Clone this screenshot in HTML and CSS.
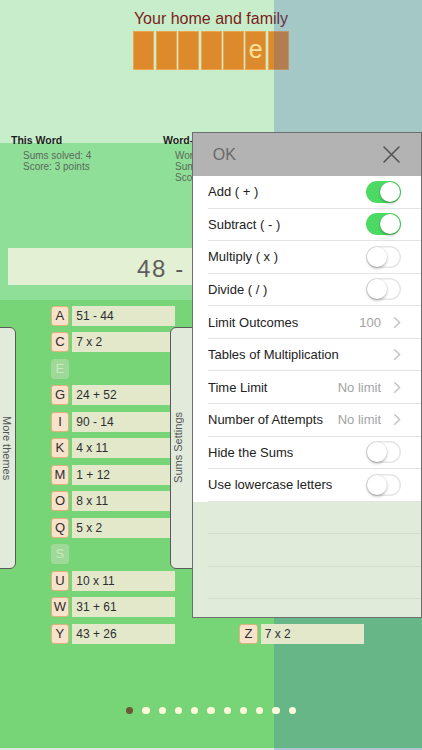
FILE: index.html
```html
<!DOCTYPE html>
<html lang="en">
<head>
<meta charset="utf-8">
<title>Letter Sums</title>
<link rel="stylesheet" href="styles.css">
</head>
<body>
<div class="screen">
  <header class="theme">
    <h1 class="theme-title">Your home and family</h1>
    <div class="word">
      <span class="cell"></span>
      <span class="cell"></span>
      <span class="cell"></span>
      <span class="cell"></span>
      <span class="cell"></span>
      <span class="cell">e</span>
      <span class="cell"></span>
    </div>
  </header>

  <section class="stats">
    <div class="stat-group">
      <h2>This Word</h2>
      <p>Sums solved: 4</p>
      <p>Score: 3 points</p>
    </div>
    <div class="stat-group">
      <h2>Word-list</h2>
      <p>Words solved: 2</p>
      <p>Sums solved: 11</p>
      <p>Score: 9 points</p>
    </div>
  </section>

  <div class="sum-bar"><span class="sum">48 - 41 = ?</span></div>

  <section class="letters">
    <div class="letter-col">
      <div class="letter-row"><span class="tile">A</span><span class="expr">51 - 44</span></div>
      <div class="letter-row"><span class="tile">C</span><span class="expr">7 x 2</span></div>
      <div class="letter-row"><span class="tile used">E</span></div>
      <div class="letter-row"><span class="tile">G</span><span class="expr">24 + 52</span></div>
      <div class="letter-row"><span class="tile">I</span><span class="expr">90 - 14</span></div>
      <div class="letter-row"><span class="tile">K</span><span class="expr">4 x 11</span></div>
      <div class="letter-row"><span class="tile">M</span><span class="expr">1 + 12</span></div>
      <div class="letter-row"><span class="tile">O</span><span class="expr">8 x 11</span></div>
      <div class="letter-row"><span class="tile">Q</span><span class="expr">5 x 2</span></div>
      <div class="letter-row"><span class="tile used">S</span></div>
      <div class="letter-row"><span class="tile">U</span><span class="expr">10 x 11</span></div>
      <div class="letter-row"><span class="tile">W</span><span class="expr">31 + 61</span></div>
      <div class="letter-row"><span class="tile">Y</span><span class="expr">43 + 26</span></div>
    </div>
    <div class="letter-col letter-col-end">
      <div class="letter-row"><span class="tile">Z</span><span class="expr">7 x 2</span></div>
    </div>
  </section>

  <nav class="pager">
    <span class="dot current"></span>
    <span class="dot"></span>
    <span class="dot"></span>
    <span class="dot"></span>
    <span class="dot"></span>
    <span class="dot"></span>
    <span class="dot"></span>
    <span class="dot"></span>
    <span class="dot"></span>
    <span class="dot"></span>
    <span class="dot"></span>
  </nav>

  <div class="shade"></div>

  <button class="edge-tab edge-tab-left" type="button"><span class="edge-label">More themes</span></button>
  <button class="edge-tab edge-tab-right" type="button"><span class="edge-label">Sums Settings</span></button>

  <div class="settings">
    <div class="settings-head">
      <span class="ok">OK</span>
      <svg class="close" width="17" height="17" viewBox="0 0 17 17">
        <path d="M1 1 L16 16 M16 1 L1 16" stroke="#555" stroke-width="1.6" fill="none" stroke-linecap="round"/>
      </svg>
    </div>
    <ul class="settings-list">
      <li class="setting"><span class="setting-label">Add ( + )</span><span class="switch on"></span></li>
      <li class="setting"><span class="setting-label">Subtract ( - )</span><span class="switch on"></span></li>
      <li class="setting"><span class="setting-label">Multiply ( x )</span><span class="switch"></span></li>
      <li class="setting"><span class="setting-label">Divide ( / )</span><span class="switch"></span></li>
      <li class="setting"><span class="setting-label">Limit Outcomes</span><span class="setting-value">100</span>
        <svg class="chevron" width="8" height="13" viewBox="0 0 8 13"><path d="M1.2 1.2 L6.6 6.5 L1.2 11.8" stroke="#c4c4c4" stroke-width="1.5" fill="none"/></svg></li>
      <li class="setting"><span class="setting-label">Tables of Multiplication</span>
        <svg class="chevron" width="8" height="13" viewBox="0 0 8 13"><path d="M1.2 1.2 L6.6 6.5 L1.2 11.8" stroke="#c4c4c4" stroke-width="1.5" fill="none"/></svg></li>
      <li class="setting"><span class="setting-label">Time Limit</span><span class="setting-value">No limit</span>
        <svg class="chevron" width="8" height="13" viewBox="0 0 8 13"><path d="M1.2 1.2 L6.6 6.5 L1.2 11.8" stroke="#c4c4c4" stroke-width="1.5" fill="none"/></svg></li>
      <li class="setting"><span class="setting-label">Number of Attempts</span><span class="setting-value">No limit</span>
        <svg class="chevron" width="8" height="13" viewBox="0 0 8 13"><path d="M1.2 1.2 L6.6 6.5 L1.2 11.8" stroke="#c4c4c4" stroke-width="1.5" fill="none"/></svg></li>
      <li class="setting"><span class="setting-label">Hide the Sums</span><span class="switch"></span></li>
      <li class="setting"><span class="setting-label">Use lowercase letters</span><span class="switch"></span></li>
    </ul>
    <ul class="settings-blank">
      <li class="setting blank"></li>
      <li class="setting blank"></li>
      <li class="setting blank"></li>
    </ul>
  </div>
</div>
</body>
</html>
```

FILE: styles.css
```css
* {
  box-sizing: border-box;
  margin: 0;
  padding: 0;
}

html,
body {
  width: 422px;
  height: 750px;
  overflow: hidden;
}

body {
  font-family: "Liberation Sans", Arial, sans-serif;
  background: linear-gradient(to bottom,
    #c8edca 0, #c8edca 143px,
    #8fdf98 143px, #8fdf98 300px,
    #77d477 300px, #77d477 748px,
    #dbe8db 748px);
}

.screen {
  position: relative;
  width: 422px;
  height: 750px;
}

/* theme title and the word being spelled */
.theme {
  padding-top: 9px;
  text-align: center;
}

.theme-title {
  font-size: 16px;
  line-height: 19px;
  font-weight: normal;
  color: #7b1d1d;
}

.word {
  display: flex;
  justify-content: center;
  gap: 1.35px;
  margin-top: 3px;
}

.cell {
  width: 21px;
  height: 39px;
  background: #dc8a2c;
  border: 1px solid #eba64f;
  color: #fde49b;
  font-size: 25px;
  line-height: 35px;
  text-align: center;
}

/* score summary */
.stats {
  display: flex;
  margin-top: 64.4px;
  padding-left: 11px;
}

.stat-group {
  width: 152px;
}

.stat-group h2 {
  font-size: 10.5px;
  line-height: 13px;
  font-weight: bold;
  color: #1d1d1d;
  margin-bottom: 2.5px;
}

.stat-group p {
  font-size: 10px;
  line-height: 11px;
  color: #5a6a5a;
  padding-left: 12px;
}

/* current sum */
.sum-bar {
  width: 406px;
  height: 36.7px;
  margin: 65.4px 0 0 8px;
  background: #e4f0d3;
  display: flex;
  align-items: center;
  padding-left: 129px;
  overflow: hidden;
  white-space: nowrap;
}

.sum {
  font-size: 24px;
  letter-spacing: 1.6px;
  color: #5e5e5e;
  line-height: 1;
  padding-top: 4px;
}

/* letter / sum pairs */
.letters {
  position: relative;
  z-index: 2;
  display: flex;
  gap: 63.8px;
  padding-left: 50.6px;
  margin-top: 21px;
}

.letter-col {
  display: flex;
  flex-direction: column;
  gap: 6.5px;
}

.letter-col-end {
  justify-content: flex-end;
}

.letter-row {
  display: flex;
  gap: 3px;
  height: 20px;
}

.tile {
  width: 18.7px;
  height: 20px;
  background: #f7e2cb;
  border: 1px solid #dfb37c;
  border-radius: 3px;
  color: #2e2e2e;
  font-size: 13px;
  line-height: 18px;
  text-align: center;
}

.tile.used {
  background: #9fd998;
  border-color: #9fd998;
  color: #c9e9c1;
}

.expr {
  width: 103px;
  height: 20px;
  background: #e3e8cb;
  color: #2e2e2e;
  font-size: 12px;
  line-height: 20px;
  padding-left: 4px;
}

/* page dots */
.pager {
  position: relative;
  z-index: 2;
  display: flex;
  justify-content: center;
  gap: 8.96px;
  margin-top: 62.7px;
}

.dot {
  width: 7.3px;
  height: 7.3px;
  border-radius: 50%;
  background: #fdf9dc;
}

.dot.current {
  background: #6b5734;
}

/* tinted right-hand strip of the next page */
.shade {
  position: absolute;
  left: 274px;
  top: 0;
  width: 148px;
  height: 750px;
  background: rgba(50, 93, 183, 0.25);
  z-index: 1;
}

/* pull tabs on the edges */
.edge-tab {
  position: absolute;
  top: 327px;
  height: 241.5px;
  background: #e1eadb;
  border: 1px solid #5a5a5a;
  font-family: inherit;
  display: flex;
  align-items: center;
  justify-content: center;
  z-index: 3;
}

.edge-tab-left {
  left: -1px;
  width: 16.7px;
  border-radius: 0 6px 6px 0;
}

.edge-tab-right {
  left: 170px;
  width: 24px;
  border-radius: 6px 0 0 6px;
  padding-right: 9px;
}

.edge-label {
  writing-mode: vertical-rl;
  font-size: 11px;
  color: #555;
  white-space: nowrap;
}

.edge-tab-right .edge-label {
  transform: rotate(180deg);
}

/* settings popover */
.settings {
  position: absolute;
  left: 192px;
  top: 132px;
  width: 230px;
  height: 486px;
  border: 1px solid #6e6e6e;
  background: #e0ebda;
  z-index: 4;
  overflow: hidden;
}

.settings-head {
  height: 43px;
  background: #b3b3b3;
  display: flex;
  align-items: center;
  justify-content: space-between;
  padding: 0 21.5px 0 19.7px;
}

.ok {
  font-size: 16px;
  color: #686868;
}

.settings-list,
.settings-blank {
  list-style: none;
}

.settings-list {
  background: #fff;
}

.setting {
  height: 32.57px;
  margin-left: 15px;
  padding-right: 20px;
  border-bottom: 1px solid #e3e3e3;
  display: flex;
  align-items: center;
  font-size: 13px;
  color: #222;
}

.setting.blank {
  border-bottom-color: #d2ddcd;
}

.setting-label {
  flex: 1;
  white-space: nowrap;
}

.setting-value {
  color: #a3a3a3;
  margin-right: 11.5px;
}

.chevron {
  flex: none;
  margin-right: 0.5px;
}

.switch {
  position: relative;
  flex: none;
  width: 35px;
  height: 22px;
  border-radius: 11px;
  background: #fff;
  box-shadow: inset 0 0 0 1.5px #e6e6e6;
}

.switch::after {
  content: "";
  position: absolute;
  top: 1px;
  left: 1px;
  width: 20px;
  height: 20px;
  border-radius: 50%;
  background: #fff;
  box-shadow: 0 1.5px 3px rgba(0, 0, 0, 0.28), 0 0 0 0.5px rgba(0, 0, 0, 0.06);
}

.switch.on {
  background: #4cd964;
  box-shadow: none;
}

.switch.on::after {
  left: 14px;
}
```
